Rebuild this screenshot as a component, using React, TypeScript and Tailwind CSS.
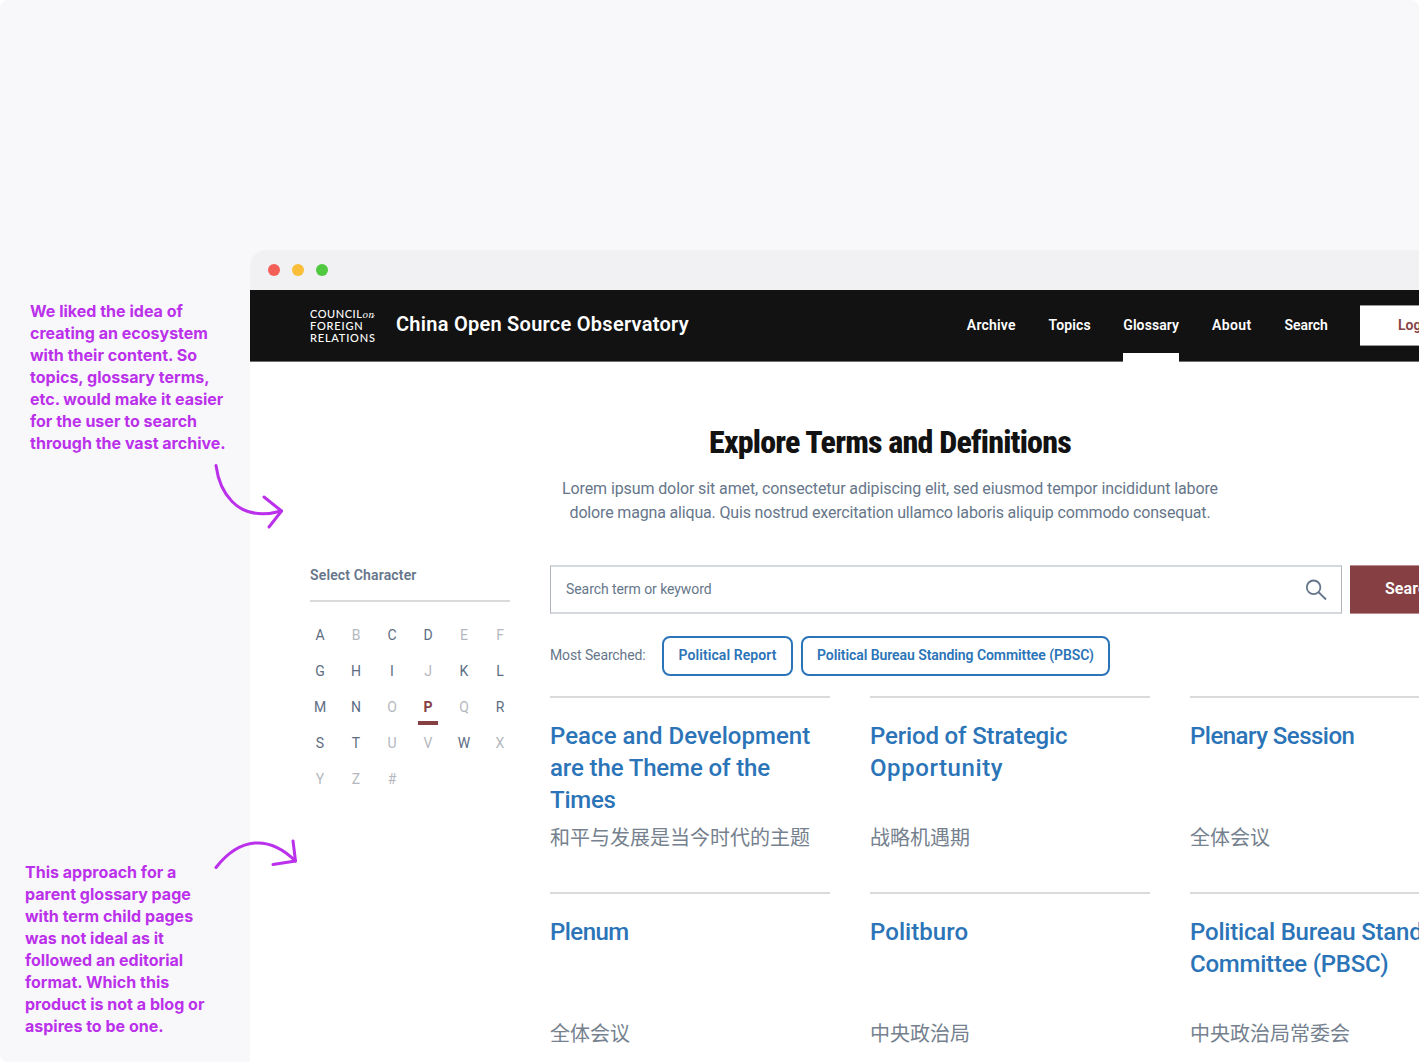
import React, { useState } from 'react';
import clsx from 'clsx';

interface TitleLine {
  text: string;
  tracking: string;
}

interface Term {
  title: TitleLine[];
  chinese: string;
}

const NAV = [
  { label: 'Archive', className: 'w-[49px] tracking-[0.2px]' },
  { label: 'Topics', className: 'w-[42px] tracking-[0.15px]' },
  { label: 'Glossary', className: 'w-[56px] tracking-[0.1px]' },
  { label: 'About', className: 'w-[40px] tracking-[0.4px]' },
  { label: 'Search', className: 'w-[43px] tracking-[-0.1px]' },
];

const LETTERS = 'ABCDEFGHIJKLMNOPQRSTUVWXYZ#'.split('');
const EMPTY_LETTERS = 'BEFJOQUVXYZ#';

const TERMS: Term[] = [
  {
    title: [
      { text: 'Peace and Development', tracking: 'tracking-[0.04px]' },
      { text: 'are the Theme of the', tracking: 'tracking-[-0.12px]' },
      { text: 'Times', tracking: 'tracking-[-0.25px]' },
    ],
    chinese: '和平与发展是当今时代的主题',
  },
  {
    title: [
      { text: 'Period of Strategic', tracking: 'tracking-[-0.16px]' },
      { text: 'Opportunity', tracking: 'tracking-[0.57px]' },
    ],
    chinese: '战略机遇期',
  },
  { title: [{ text: 'Plenary Session', tracking: 'tracking-[-0.52px]' }], chinese: '全体会议' },
  { title: [{ text: 'Plenum', tracking: 'tracking-[-0.55px]' }], chinese: '全体会议' },
  { title: [{ text: 'Politburo', tracking: 'tracking-[0.06px]' }], chinese: '中央政治局' },
  {
    title: [
      { text: 'Political Bureau Standing', tracking: 'tracking-[-0.2px]' },
      { text: 'Committee (PBSC)', tracking: 'tracking-[-0.22px]' },
    ],
    chinese: '中央政治局常委会',
  },
];

const NOTE_ONE = [
  'We liked the idea of',
  'creating an ecosystem',
  'with their content. So',
  'topics, glossary terms,',
  'etc. would make it easier',
  'for the user to search',
  'through the vast archive.',
];

const NOTE_TWO = [
  'This approach for a',
  'parent glossary page',
  'with term child pages',
  'was not ideal as it',
  'followed an editorial',
  'format. Which this',
  'product is not a blog or',
  'aspires to be one.',
];

const Note = ({ lines, className }: { lines: string[]; className?: string }) => (
  <p className={clsx("font-['Inter',sans-serif] text-base leading-[22px] font-bold text-[#bb30ea] whitespace-nowrap tracking-[0.01px]", className)}>
    {lines.map((line) => (
      <span key={line} className="block">{line}</span>
    ))}
  </p>
);

const Arrows = () => (
  <svg
    className="absolute left-0 top-0 pointer-events-none"
    width="320"
    height="900"
    fill="none"
    stroke="#bb30ea"
    strokeWidth="3"
    strokeLinecap="round"
    strokeLinejoin="round"
  >
    <path d="M216 465.5C219 488 234 524 281.5 511" />
    <path d="M264 497L281.5 511L269 527" />
    <path d="M216 867.5C240 837 269 835 295.5 861" />
    <path d="M293 841L295.5 861L273 864.5" />
  </svg>
);

const Logo = () => (
  <div className="w-[86px] font-['Lato',sans-serif] text-[11px] leading-[12px] font-medium text-white whitespace-nowrap">
    <div className="flex">
      <span className="tracking-[0.55px]">COUNCIL</span>
      <span className="font-['Liberation_Serif',serif] italic text-[11px] tracking-[0.6px]">on</span>
      <svg className="-ml-1 mt-[7px]" width="4" height="3" viewBox="0 0 4 3" fill="none" stroke="white" strokeWidth="0.7">
        <path d="M0 2.3C2 2.5 3 1.5 3.6 0.3" />
      </svg>
    </div>
    <div className="tracking-[0.8px]">FOREIGN</div>
    <div className="tracking-[0.8px]">RELATIONS</div>
  </div>
);

const Header = () => (
  <header className="h-[72px] bg-[#121212] border-b border-[#6f6f6f] pl-[60px] pr-[60px] flex">
    <div className="flex items-start pt-[18px]">
      <Logo />
      <span className="mt-0.5 text-xl leading-7 font-semibold tracking-[0.26px] text-white whitespace-nowrap">
        China Open Source Observatory
      </span>
    </div>
    <nav className="ml-auto flex gap-[32.7px]">
      {NAV.map(({ label, className }) => (
        <a
          key={label}
          className={clsx(
            'h-[71px] pt-[25px] text-sm leading-5 font-semibold text-white whitespace-nowrap flex flex-col justify-between',
            className
          )}
        >
          {label}
          {label === 'Glossary' && <span className="h-[9px] -mb-px bg-white" />}
        </a>
      ))}
    </nav>
    <button className="ml-[32.4px] mt-[15px] w-[110px] h-[41px] shrink-0 bg-white border-y border-[#999] pl-[38px] pb-0.5 text-left text-sm font-semibold text-[#863f43] whitespace-nowrap">
      Log In
    </button>
  </header>
);

const CharacterPicker = () => {
  const [selected, setSelected] = useState('P');

  return (
    <aside className="w-[200px] shrink-0">
      <h2 className="text-sm leading-5 font-semibold tracking-[0.15px] text-[#66768a]">Select Character</h2>
      <div className="mt-[15px] mb-[15px] h-0.5 bg-[#d9dadc]" />
      <div className="grid grid-cols-[repeat(6,20px)] gap-x-4">
        {LETTERS.map((letter) => (
          <button
            key={letter}
            onClick={() => setSelected(letter)}
            className={clsx(
              'h-9 flex items-center justify-center text-sm leading-5',
              letter === selected
                ? 'border-b-4 border-[#863f43] pt-1 font-bold text-[#863f43]'
                : EMPTY_LETTERS.includes(letter)
                  ? 'text-[#b4b8be]'
                  : 'text-[#5c6d82]'
            )}
          >
            {letter}
          </button>
        ))}
      </div>
    </aside>
  );
};

const SearchBar = () => (
  <div className="flex gap-2">
    <div className="w-[792px] h-[49px] flex items-center justify-between pl-[15px] pr-[14px] border-x border-y-2 border-x-[#b0b5bc] border-y-[#d5d8dc]">
      <span className="text-sm leading-5 -mt-0.5 tracking-[-0.07px] text-[#66768a]">Search term or keyword</span>
      <svg width="22" height="22" viewBox="0 0 22 22" fill="none" stroke="#66768a" strokeWidth="1.8">
        <circle cx="8.6" cy="8.3" r="6.8" />
        <path d="M13.4 13L21 20.5" />
      </svg>
    </div>
    <button className="w-[120px] h-[49px] bg-[#863f43] border-y border-[#b78d90] pl-[35px] pb-0.5 text-left text-base font-semibold text-white tracking-[0.1px]">
      Search
    </button>
  </div>
);

const Pill = ({ children, className }: { children: string; className: string }) => (
  <button className={clsx('h-10 border-2 border-[#2b74b8] rounded-lg pb-0.5 text-sm font-semibold text-[#2b74b8] whitespace-nowrap', className)}>
    {children}
  </button>
);

const TermCard = ({ term }: { term: Term }) => (
  <article className="h-[196px] border-t-2 border-[#d9dadc] pt-[22px]">
    <h3 className="h-24 text-2xl leading-8 font-medium text-[#2b74b8] whitespace-nowrap">
      {term.title.map(({ text, tracking }) => (
        <span key={text} className={clsx('block', tracking)}>{text}</span>
      ))}
    </h3>
    <p className="mt-[7px] font-['Noto_Sans_CJK_SC',sans-serif] text-xl leading-7 text-[#75818e] whitespace-nowrap">{term.chinese}</p>
  </article>
);

export default function App() {
  return (
    <div className="bg-white w-[1419px] h-[1062px] overflow-hidden">
      <div className="relative flex w-full h-full bg-[#f8f8fb] rounded-lg overflow-hidden font-['Roboto',sans-serif]">
        {/* Side notes */}
        <div className="w-[250px] shrink-0 pt-[300px]">
          <Note lines={NOTE_ONE} className="pl-[30px]" />
          <Note lines={NOTE_TWO} className="pl-[25px] mt-[407px]" />
        </div>

        {/* Browser window */}
        <div className="mt-[250px] w-[1280px] h-[812px] shrink-0 rounded-tl-2xl bg-white overflow-hidden">
          <div className="h-10 bg-[#f1f1f3] flex items-center gap-3 pl-[18px]">
            <span className="size-3 rounded-full bg-[#f45f58]" />
            <span className="size-3 rounded-full bg-[#f9bd37]" />
            <span className="size-3 rounded-full bg-[#50c840]" />
          </div>
          <Header />

          <section className="pt-[60px] text-center">
            <h1 className="text-[32px] leading-10 font-extrabold [font-stretch:75%] tracking-[-0.8px] text-[#121212]">
              Explore Terms and Definitions
            </h1>
            <p className="mt-[15px] text-base leading-6 text-[#66768a]">
              <span className="block tracking-[-0.106px]">
                Lorem ipsum dolor sit amet, consectetur adipiscing elit, sed eiusmod tempor incididunt labore
              </span>
              <span className="block tracking-[-0.164px]">
                dolore magna aliqua. Quis nostrud exercitation ullamco laboris aliquip commodo consequat.
              </span>
            </p>
          </section>

          <div className="mt-10 px-[60px] flex gap-10">
            <CharacterPicker />
            <main className="w-[920px] shrink-0">
              <SearchBar />
              <div className="mt-[22px] flex items-center">
                <span className="w-[112px] -mt-0.5 text-sm tracking-[-0.12px] text-[#66768a]">Most Searched:</span>
                <Pill className="w-[131px] tracking-[0.09px]">Political Report</Pill>
                <Pill className="ml-2 w-[309px] tracking-[-0.07px]">Political Bureau Standing Committee (PBSC)</Pill>
              </div>
              <div className="mt-5 grid grid-cols-3 gap-x-10">
                {TERMS.map((term) => (
                  <TermCard key={term.title[0].text} term={term} />
                ))}
              </div>
            </main>
          </div>
        </div>

        <Arrows />
      </div>
    </div>
  );
}
